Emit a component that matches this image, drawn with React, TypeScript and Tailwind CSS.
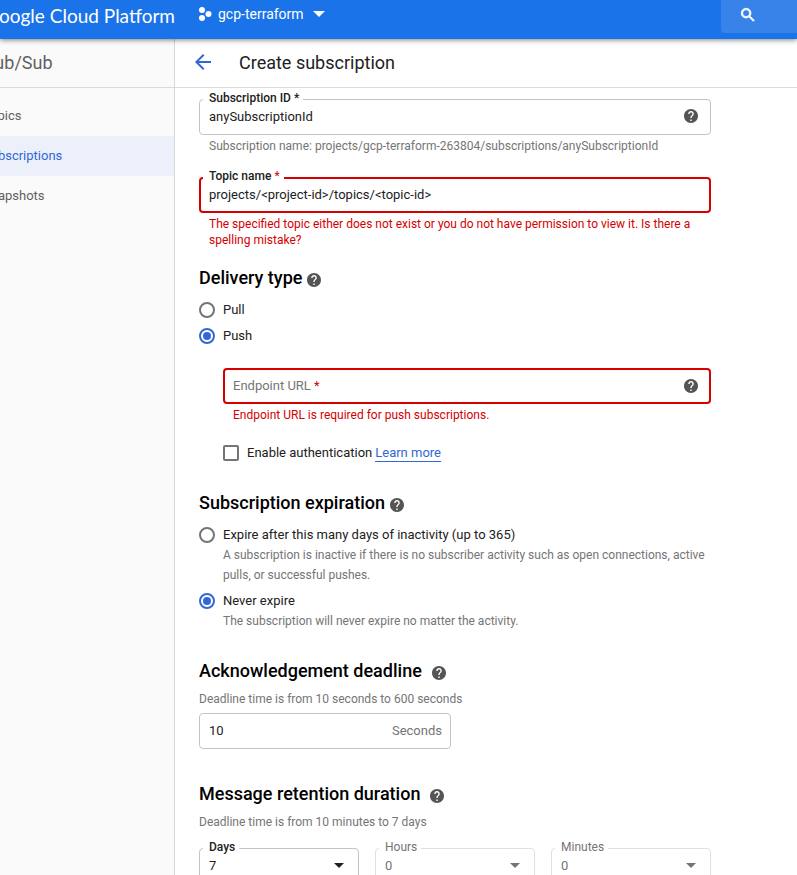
import { useState } from "react";
import type { ReactNode } from "react";

const HelpIcon = ({ label }: { label: string }) => (
  <button type="button" aria-label={label} className="flex h-4 w-4 shrink-0 items-center justify-center text-[#555]">
    <svg viewBox="2 2 20 20" className="h-[14px] w-[14px]" fill="currentColor" aria-hidden="true">
      <path d="M12 2C6.48 2 2 6.48 2 12s4.48 10 10 10 10-4.48 10-10S17.52 2 12 2zm1 17h-2v-2h2v2zm2.07-7.75l-.9.92C13.45 12.9 13 13.5 13 15h-2v-.5c0-1.1.45-2.1 1.17-2.83l1.24-1.26c.37-.36.59-.86.59-1.41 0-1.1-.9-2-2-2s-2 .9-2 2H8c0-2.21 1.79-4 4-4s4 1.79 4 4c0 .88-.36 1.68-.93 2.25z" />
    </svg>
  </button>
);

const floatingLabel = "absolute -top-2 left-1 bg-white pl-1.5 pr-1 text-[12px] leading-[14px]";
const hint = "text-[12px] text-[#757575]";

function Heading({ children, help, gap }: { children: ReactNode; help: string; gap: string }) {
  return (
    <div className={"flex items-center " + gap}>
      <h2 className="text-[18px] font-medium leading-6 text-black">{children}</h2>
      <div className="pt-[3px]">
        <HelpIcon label={help} />
      </div>
    </div>
  );
}

function Radio({
  name,
  label,
  checked,
  onSelect,
}: {
  name: string;
  label: string;
  checked: boolean;
  onSelect: () => void;
}) {
  return (
    <label className="flex h-[26px] items-center gap-2 text-[13px] text-[#212121]">
      <input
        type="radio"
        name={name}
        checked={checked}
        onChange={onSelect}
        className="h-4 w-4 shrink-0 appearance-none rounded-full border-2 border-[#757575] bg-clip-content p-0.5 checked:border-[#3367d6] checked:bg-[#3367d6]"
      />
      {label}
    </label>
  );
}

function DurationSelect({ id, label, value, disabled }: { id: string; label: string; value: string; disabled?: boolean }) {
  return (
    <div className={"relative flex-1 " + (disabled ? "text-[#757575]" : "text-[#212121]")}>
      <select
        id={id}
        disabled={disabled}
        defaultValue={value}
        className={
          "h-9 w-full appearance-none rounded border bg-white px-[9px] text-[13px] opacity-100 " +
          (disabled ? "border-[#e0e0e0]" : "border-[#c4c4c4]")
        }
      >
        <option>{value}</option>
      </select>
      <label htmlFor={id} className={floatingLabel + (disabled ? "" : " font-medium")}>
        {label}
      </label>
      <svg viewBox="0 0 10 5" className="pointer-events-none absolute right-[15px] top-[15px] h-[5px] w-[10px]" fill="currentColor" aria-hidden="true">
        <path d="M0 0h10L5 5z" />
      </svg>
    </div>
  );
}

export default function App() {
  const [delivery, setDelivery] = useState("push");
  const [expiry, setExpiry] = useState("never");

  return (
    <div className="flex h-screen flex-col overflow-hidden bg-white font-[Roboto,sans-serif]">
      <header className="z-10 flex h-[39px] shrink-0 bg-[#1a73e8] text-white shadow-[0_1px_5px_rgba(0,0,0,0.5)]">
        <div className="flex h-8 w-[175px] shrink-0 items-center justify-end overflow-hidden whitespace-nowrap font-[Lato,sans-serif] text-[19px]">
          Google Cloud Platform
        </div>
        <button type="button" className="ml-[23px] flex h-7 items-center text-[14px]">
          <svg viewBox="0 0 14 14" className="mr-1.5 h-[14px] w-[14px]" fill="currentColor" aria-hidden="true">
            <circle cx="4" cy="3" r="3" />
            <circle cx="4" cy="11" r="3" />
            <circle cx="10.5" cy="7" r="3" />
          </svg>
          gcp-terraform
          <svg viewBox="0 0 12 6" className="ml-[9px] h-[6px] w-[12px]" fill="currentColor" aria-hidden="true">
            <path d="M0 0h12L6 6z" />
          </svg>
        </button>
        <button type="button" aria-label="Search" className="ml-auto h-[33px] w-[76px] rounded-bl-sm bg-[#3783ea] pb-1 pl-[18px]">
          <svg viewBox="0 0 24 24" className="h-[18px] w-[18px]" fill="currentColor" stroke="currentColor" aria-hidden="true">
            <path d="M15.5 14h-.79l-.28-.27C15.41 12.59 16 11.11 16 9.5 16 5.91 13.09 3 9.5 3S3 5.91 3 9.5 5.91 16 9.5 16c1.61 0 3.09-.59 4.23-1.57l.27.28v.79l5 4.99L20.49 19l-4.99-5zm-6 0C7.01 14 5 11.99 5 9.5S7.01 5 9.5 5 14 7.01 14 9.5 11.99 14 9.5 14z" />
          </svg>
        </button>
      </header>

      <div className="flex min-h-0 flex-1">
        <aside className="w-[175px] shrink-0 overflow-hidden border-r border-[#d8d8d8] bg-[#fafafa]">
          <div className="-ml-[17px] flex h-[49px] items-center border-b border-[#dadada] pb-0.5 text-[18px] text-[#616161]">Pub/Sub</div>
          <nav className="-ml-[17px] flex flex-col pt-2 text-[13px] text-[#616161]">
            <a href="#topics" className="flex h-10 items-center">Topics</a>
            <a href="#subscriptions" className="flex h-10 items-center bg-[#ebf0fa] text-[#3367d6]">Subscriptions</a>
            <a href="#snapshots" className="flex h-10 items-center">Snapshots</a>
          </nav>
        </aside>

        <main className="flex min-w-0 flex-1 flex-col">
          <div className="flex h-[49px] shrink-0 items-center border-b border-[#dadada] pb-0.5 pl-5">
            <button type="button" aria-label="Back" className="text-[#3367d6]">
              <svg viewBox="4 4 16 16" className="h-4 w-4" fill="currentColor" aria-hidden="true">
                <path d="M20 11H7.83l5.59-5.59L12 4l-8 8 8 8 1.41-1.41L7.83 13H20v-2z" />
              </svg>
            </button>
            <h1 className="ml-7 text-[18px] text-[#212121]">Create subscription</h1>
          </div>

          <form className="min-h-0 flex-1 overflow-hidden pl-6 pt-[11px]">
            <div className="max-w-[512px]">
              <div className="relative">
                <input
                  id="subscription"
                  defaultValue="anySubscriptionId"
                  className="block h-9 w-full rounded border border-[#c4c4c4] pb-0.5 pl-[9px] pr-9 text-[13px] text-[#212121]"
                />
                <label htmlFor="subscription" className={floatingLabel + " font-medium text-[#212121]"}>Subscription ID *</label>
                <div className="absolute right-3 top-[9px]">
                  <HelpIcon label="Help: subscription ID" />
                </div>
              </div>
              <p className={"mt-[3px] pl-2.5 leading-4 " + hint}>
                Subscription name: projects/gcp-terraform-263804/subscriptions/anySubscriptionId
              </p>

              <div className="relative mt-[23px]">
                <input
                  id="topic"
                  defaultValue="projects/<project-id>/topics/<topic-id>"
                  className="block h-9 w-full rounded border-2 border-[#d50000] px-2 pb-0.5 text-[13px] text-[#212121]"
                />
                <label htmlFor="topic" className={floatingLabel + " font-medium text-[#212121]"}>
                  Topic name <span className="font-normal text-[#d50000]">*</span>
                </label>
              </div>
              <p className="mt-[3px] px-2.5 text-[12px] leading-4 text-[#d50000]">
                The specified topic either does not exist or you do not have permission to view it. Is there a spelling mistake?
              </p>

              <section className="mt-[18px]">
                <Heading help="Help: delivery type" gap="gap-1">Delivery type</Heading>
                <div className="mt-[7px]">
                  <Radio name="delivery" label="Pull" checked={delivery === "pull"} onSelect={() => setDelivery("pull")} />
                  <Radio name="delivery" label="Push" checked={delivery === "push"} onSelect={() => setDelivery("push")} />
                </div>
                <div className="ml-6 mt-[19px]">
                  <div className="relative">
                    <input id="endpoint" required className="block h-9 w-full rounded border-2 border-[#d50000] pl-2 pr-9 text-[13px]" />
                    <label htmlFor="endpoint" className="absolute left-2.5 top-2.5 text-[13px] leading-4 text-[#757575]">
                      Endpoint URL <span className="text-[#d50000]">*</span>
                    </label>
                    <div className="absolute right-3 top-2.5">
                      <HelpIcon label="Help: endpoint URL" />
                    </div>
                  </div>
                  <p className="mt-[3px] pl-2.5 text-[12px] leading-4 text-[#d50000]">Endpoint URL is required for push subscriptions.</p>
                  <div className="mt-[17px] flex h-[26px] items-center text-[13px] text-[#212121]">
                    <input
                      id="auth"
                      type="checkbox"
                      className="mr-2 h-4 w-4 appearance-none rounded-[2px] border-2 border-[#757575] checked:bg-[#3367d6]"
                    />
                    <label htmlFor="auth" className="mr-[3px]">Enable authentication</label>
                    <a href="#learn" className="border-b border-[#3367d6] leading-4 text-[#3367d6]">Learn more</a>
                  </div>
                </div>
              </section>

              <section className="mt-[25px]">
                <Heading help="Help: subscription expiration" gap="gap-1">Subscription expiration</Heading>
                <div className="mt-[7px]">
                  <Radio
                    name="expiry"
                    label="Expire after this many days of inactivity (up to 365)"
                    checked={expiry === "days"}
                    onSelect={() => setExpiry("days")}
                  />
                  <p className={"-mt-[3px] pl-6 leading-5 " + hint}>
                    A subscription is inactive if there is no subscriber activity such as open connections, active pulls, or successful pushes.
                  </p>
                </div>
                <div className="mt-[3px]">
                  <Radio name="expiry" label="Never expire" checked={expiry === "never"} onSelect={() => setExpiry("never")} />
                  <p className={"-mt-[3px] pl-6 leading-5 " + hint}>The subscription will never expire no matter the activity.</p>
                </div>
              </section>

              <section className="mt-7">
                <Heading help="Help: acknowledgement deadline" gap="gap-[9px]">Acknowledgement deadline</Heading>
                <p className={"mt-1.5 leading-5 " + hint}>Deadline time is from 10 seconds to 600 seconds</p>
                <div className="mt-1 flex h-9 w-[252px] items-center rounded border border-[#c4c4c4] px-2 text-[13px]">
                  <input id="deadline" defaultValue="10" className="min-w-0 flex-1 pl-px text-[#212121] outline-none" />
                  <label htmlFor="deadline" className="text-[#757575]">Seconds</label>
                </div>
              </section>

              <section className="mt-[33px]">
                <Heading help="Help: message retention duration" gap="gap-[9px]">Message retention duration</Heading>
                <p className={"mt-1.5 leading-5 " + hint}>Deadline time is from 10 minutes to 7 days</p>
                <div className="mt-4 flex gap-4">
                  <DurationSelect id="days" label="Days" value="7" />
                  <DurationSelect id="hours" label="Hours" value="0" disabled />
                  <DurationSelect id="minutes" label="Minutes" value="0" disabled />
                </div>
              </section>
            </div>
          </form>
        </main>
      </div>
    </div>
  );
}
